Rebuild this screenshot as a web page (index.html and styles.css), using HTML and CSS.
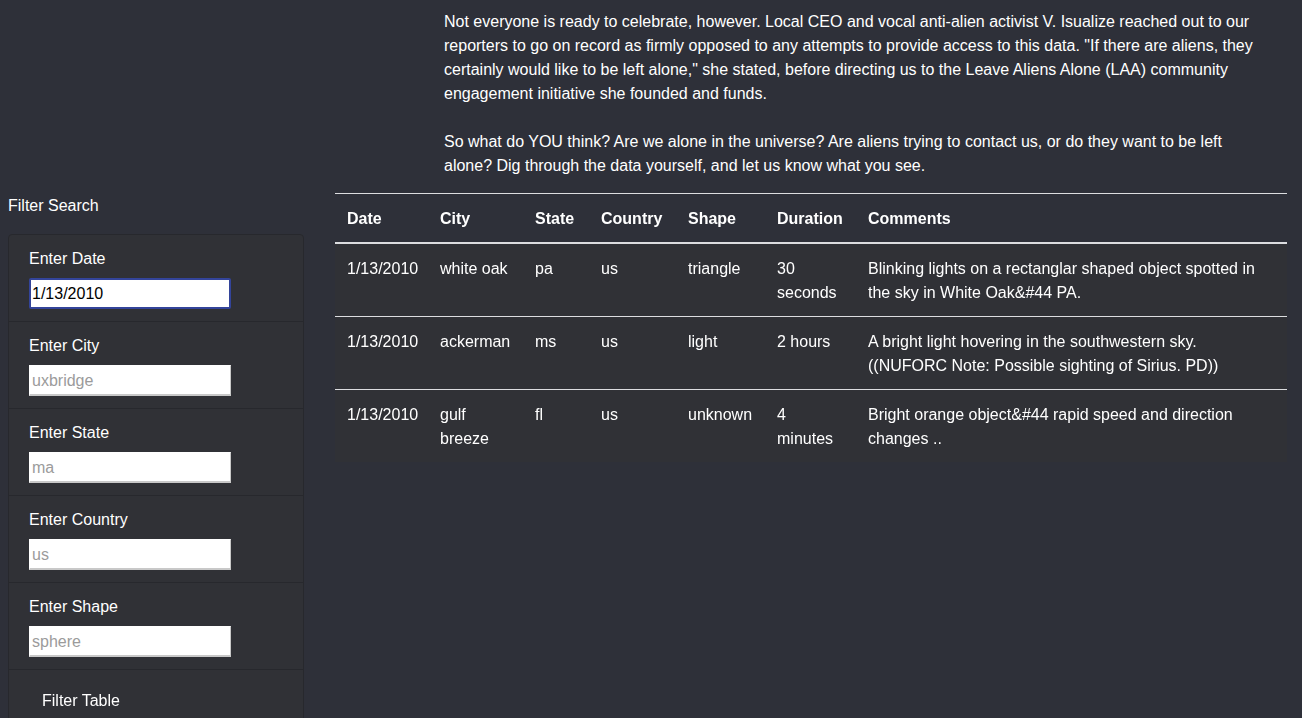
FILE: index.html
```html
<!DOCTYPE html>
<html lang="en">
<head>
<meta charset="utf-8">
<title>UFO Sightings</title>
<link rel="stylesheet" href="styles.css">
</head>
<body>
<div class="page">
  <section class="article">
    <p>Not everyone is ready to celebrate, however. Local CEO and vocal anti-alien activist V. Isualize reached out to our reporters to go on record as firmly opposed to any attempts to provide access to this data. "If there are aliens, they certainly would like to be left alone," she stated, before directing us to the Leave Aliens Alone (LAA) community engagement initiative she founded and funds.</p>
    <p>So what do YOU think? Are we alone in the universe? Are aliens trying to contact us, or do they want to be left alone? Dig through the data yourself, and let us know what you see.</p>
  </section>
  <div class="main">
    <aside class="filters">
      <div class="filters-title">Filter Search</div>
      <ul class="filter-list">
        <li class="filter-item">
          <label class="filter-label" for="datetime">Enter Date</label>
          <input class="filter-input is-active" id="datetime" type="text" value="1/13/2010" autofocus>
        </li>
        <li class="filter-item">
          <label class="filter-label" for="city">Enter City</label>
          <input class="filter-input" id="city" type="text" placeholder="uxbridge">
        </li>
        <li class="filter-item">
          <label class="filter-label" for="state">Enter State</label>
          <input class="filter-input" id="state" type="text" placeholder="ma">
        </li>
        <li class="filter-item">
          <label class="filter-label" for="country">Enter Country</label>
          <input class="filter-input" id="country" type="text" placeholder="us">
        </li>
        <li class="filter-item">
          <label class="filter-label" for="shape">Enter Shape</label>
          <input class="filter-input" id="shape" type="text" placeholder="sphere">
        </li>
        <li class="filter-item">
          <button class="filter-btn" type="button">Filter Table</button>
        </li>
      </ul>
    </aside>
    <div class="results">
      <table class="ufo-table">
        <colgroup>
          <col class="c-date"><col class="c-city"><col class="c-state"><col class="c-country"><col class="c-shape"><col class="c-duration"><col class="c-comments">
        </colgroup>
        <thead>
          <tr>
            <th>Date</th><th>City</th><th>State</th><th>Country</th><th>Shape</th><th>Duration</th><th>Comments</th>
          </tr>
        </thead>
        <tbody>
          <tr>
            <td>1/13/2010</td><td>white oak</td><td>pa</td><td>us</td><td>triangle</td><td>30 seconds</td><td>Blinking lights on a rectanglar shaped object spotted in the sky in White Oak&amp;#44 PA.</td>
          </tr>
          <tr>
            <td>1/13/2010</td><td>ackerman</td><td>ms</td><td>us</td><td>light</td><td>2 hours</td><td>A bright light hovering in the southwestern sky. ((NUFORC Note: Possible sighting of Sirius. PD))</td>
          </tr>
          <tr>
            <td>1/13/2010</td><td>gulf breeze</td><td>fl</td><td>us</td><td>unknown</td><td>4 minutes</td><td>Bright orange object&amp;#44 rapid speed and direction changes ..</td>
          </tr>
        </tbody>
      </table>
    </div>
  </div>
</div>
</body>
</html>
```
FILE: styles.css
```css
* { box-sizing: border-box; }
html, body {
  margin: 0;
  padding: 0;
  background: #2e3039;
  color: #ffffff;
  font-family: "Liberation Sans", Arial, sans-serif;
  font-size: 16px;
  line-height: 24px;
}
.page {
  height: 718px;
  overflow: hidden;
}
.article {
  padding: 10px 0 0 444px;
  width: 1264px;
}
.article p {
  margin: 0 0 24px;
}
.article p:last-child {
  margin-bottom: 15px;
}
.main {
  display: flex;
  align-items: flex-start;
  gap: 31px;
  padding-left: 8px;
}
.filters {
  width: 296px;
  flex: none;
}
.filters-title {
  line-height: 24px;
  padding-top: 1px;
  margin-bottom: 16px;
}
.filter-list {
  list-style: none;
  margin: 0;
  padding: 0;
  border: 1px solid #27282d;
  border-radius: 4px;
  background: #303136;
}
.filter-item {
  padding: 12px 20px;
  height: 87px;
  border-bottom: 1px solid #27282d;
}
.filter-label {
  display: block;
  line-height: 24px;
  margin-bottom: 7px;
}
.filter-input {
  display: block;
  width: 202px;
  height: 31px;
  margin: 0;
  padding: 1px 2px 0;
  font-family: "Liberation Sans", Arial, sans-serif;
  font-size: 16px;
  color: #000;
  background: #fff;
  border: 1px solid #ffffff;
  border-right-color: #c8c8c8;
  border-bottom: 2px solid #c8c8c8;
  border-radius: 0;
  outline: none;
}
.filter-input::placeholder {
  color: #9b9b9b;
}
.filter-input.is-active {
  border: 2px solid #33449a;
  border-radius: 2px;
  padding: 0 1px;
}
.filter-btn {
  font-family: "Liberation Sans", Arial, sans-serif;
  font-size: 16px;
  line-height: 24px;
  color: #fff;
  background: transparent;
  border: 1px solid transparent;
  padding: 6px 12px;
  margin-left: 0;
}
.results {
  width: 952px;
  flex: none;
}
.ufo-table {
  width: 952px;
  border-collapse: collapse;
  table-layout: fixed;
}
.c-date { width: 93px; }
.c-city { width: 95px; }
.c-state { width: 66px; }
.c-country { width: 87px; }
.c-shape { width: 89px; }
.c-duration { width: 91px; }
.c-comments { width: 431px; }
.ufo-table th,
.ufo-table td {
  text-align: left;
  vertical-align: top;
  padding: 13px 12px 11px;
  line-height: 24px;
}
.ufo-table th {
  font-weight: bold;
  border-top: 1px solid #dcdde0;
  border-bottom: 2px solid #dcdde0;
}
.ufo-table td {
  border-top: 1px solid #dcdde0;
  background: #303136;
}
.ufo-table tbody tr:first-child td {
  border-top: none;
}
```
